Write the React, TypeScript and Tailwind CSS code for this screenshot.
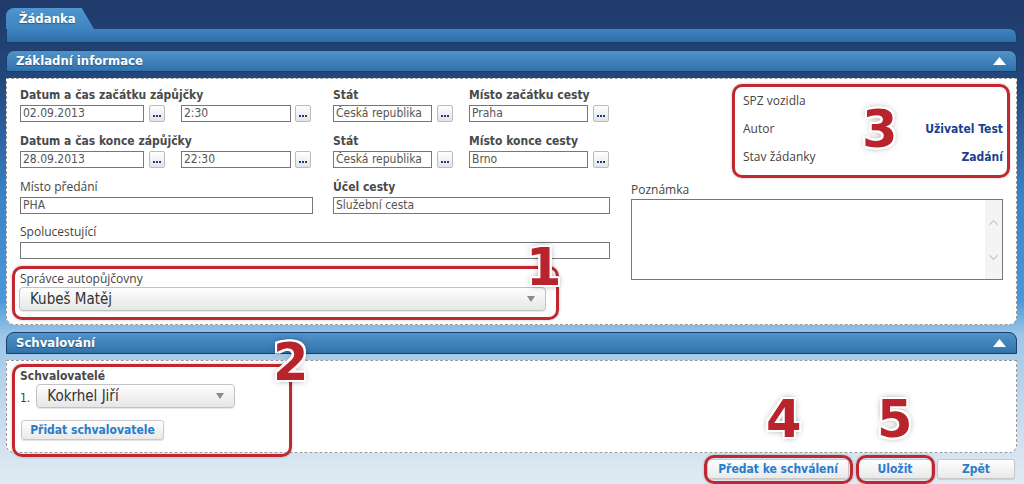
import React from 'react';
import { ChevronUp, ChevronDown } from 'lucide-react';

const tahoma = "font-['DejaVu_Sans_Condensed','DejaVu_Sans',sans-serif]";
const segoe = "font-['Open_Sans','Noto_Sans',sans-serif]";

const Input: React.FC<{ value?: string; w: string }> = ({ value, w }) => (
  <div className={`${w} ${tahoma} h-[17px] border border-[#777] bg-white px-[2px] text-[12px] leading-[15px] text-[#555] overflow-hidden whitespace-nowrap`}>
    {value}
  </div>
);

const Dots = () => (
  <div className="flex h-[17px] w-[16px] items-end justify-center gap-[1px] rounded-[2px] border border-[#bcbcbc] bg-gradient-to-b from-white to-[#e4e4e4] pb-[4px]">
    <span className="h-[2px] w-[2px] bg-[#1b3f8c]" />
    <span className="h-[2px] w-[2px] bg-[#1b3f8c]" />
    <span className="h-[2px] w-[2px] bg-[#1b3f8c]" />
  </div>
);

const BoldLabel: React.FC<{ children: React.ReactNode }> = ({ children }) => (
  <div className={`${tahoma} h-[16px] text-[12px] font-bold leading-[16px] text-[#4a4a4a] whitespace-nowrap`}>{children}</div>
);

const Label: React.FC<{ children: React.ReactNode }> = ({ children }) => (
  <div className={`${segoe} h-[16px] text-[12px] leading-[16px] text-[#444] whitespace-nowrap`}>{children}</div>
);

const UpArrow = () => (
  <svg width="13" height="8" viewBox="0 0 13 8">
    <polygon points="6.5,0 13,8 0,8" fill="#fff" />
  </svg>
);

const SectionHeader: React.FC<{ title: string }> = ({ title }) => (
  <div className="flex h-[22px] items-center justify-between rounded-t-[8px] border border-[#1b3d66] bg-gradient-to-b from-[#4e93ca] to-[#3273ab] pl-[9px] pr-[10px]">
    <span className={`${tahoma} text-[13px] font-bold text-white [text-shadow:0_1px_1px_rgba(0,0,0,0.35)]`}>{title}</span>
    <UpArrow />
  </div>
);

const Select: React.FC<{ value: string; w: string }> = ({ value, w }) => (
  <div className={`${w} flex h-[24px] items-center justify-between rounded-[4px] border border-[#c2c2c2] bg-gradient-to-b from-[#fefefe] to-[#e6e6e6] pl-[10px] pr-[10px] shadow-[0_1px_1px_rgba(0,0,0,0.1)]`}>
    <span className={`${tahoma} text-[15px] text-[#333]`}>{value}</span>
    <svg width="8" height="6" viewBox="0 0 8 6">
      <polygon points="0,0 8,0 4,6" fill="#8a8a8a" />
    </svg>
  </div>
);

const Button: React.FC<{ label: string; w: string }> = ({ label, w }) => (
  <div className={`${w} ${tahoma} flex h-[20px] items-center justify-center rounded-[3px] border border-[#c8c8c8] bg-gradient-to-b from-white to-[#e9e9e9] text-[12px] font-bold text-[#2a7ccc] shadow-[0_1px_1px_rgba(0,0,0,0.12)]`}>
    {label}
  </div>
);

const numStyle =
  "absolute font-['DejaVu_Sans',sans-serif] text-[51px] font-bold leading-none text-[#b9232b] [text-shadow:-2px_-2px_0_#fff,2px_-2px_0_#fff,-2px_2px_0_#fff,2px_2px_0_#fff,0_2px_0_#fff,0_-2px_0_#fff,2px_0_0_#fff,-2px_0_0_#fff,0_0_7px_rgba(0,0,0,0.55)]";
const boxStyle = 'absolute rounded-[10px] border-[3px] border-[#c1272e] shadow-[0_0_3px_rgba(0,0,0,0.25)]';

export default function App() {
  return (
    <div className="relative h-[484px] w-[1024px] overflow-hidden bg-[linear-gradient(to_bottom,#1f3a6a_0px,#23467c_78px,#3a84ca_200px,#4a98d8_300px,#7cb6e2_322px,#9cc6e8_335px,#c4daee_410px,#e2ebf4_484px)] pl-[6px] pr-[7px] pt-[8px]">
      {/* tab */}
      <div className="flex h-[21px] w-[88px] items-center rounded-tl-[8px] bg-gradient-to-b from-[#4f95ce] to-[#3d84c1] pl-[13px] [clip-path:polygon(0_0,86%_0,100%_100%,0_100%)]">
        <span className={`${tahoma} text-[13px] font-bold text-white [text-shadow:0_1px_1px_rgba(0,0,0,0.35)]`}>Žádanka</span>
      </div>
      <div className="h-[14px] rounded-tr-[7px] border-x border-b border-[#1b3d66] bg-gradient-to-b from-[#3d84c1] to-[#2f6ea8]" />

      {/* Základní informace */}
      <div className="mt-[7px]">
        <SectionHeader title="Základní informace" />
      </div>
      <div className="mt-[6px] flex h-[247px] rounded-b-[8px] border border-dashed border-[#9a9a9a] bg-white pl-[13px] pt-[8px]">
        <div className="w-[590px]">
          {/* row A */}
          <div className="flex">
            <div className="w-[313px]">
              <BoldLabel>Datum a čas začátku zápůjčky</BoldLabel>
              <div className="mt-[2px] flex items-center">
                <Input w="w-[124px]" value="02.09.2013" />
                <div className="ml-[5px]"><Dots /></div>
                <div className="ml-[16px]"><Input w="w-[110px]" value="2:30" /></div>
                <div className="ml-[4px]"><Dots /></div>
              </div>
            </div>
            <div className="w-[136px]">
              <BoldLabel>Stát</BoldLabel>
              <div className="mt-[2px] flex items-center">
                <Input w="w-[99px]" value="Česká republika" />
                <div className="ml-[5px]"><Dots /></div>
              </div>
            </div>
            <div>
              <BoldLabel>Místo začátku cesty</BoldLabel>
              <div className="mt-[2px] flex items-center">
                <Input w="w-[119px]" value="Praha" />
                <div className="ml-[5px]"><Dots /></div>
              </div>
            </div>
          </div>
          {/* row B */}
          <div className="mt-[11px] flex">
            <div className="w-[313px]">
              <BoldLabel>Datum a čas konce zápůjčky</BoldLabel>
              <div className="mt-[2px] flex items-center">
                <Input w="w-[124px]" value="28.09.2013" />
                <div className="ml-[5px]"><Dots /></div>
                <div className="ml-[16px]"><Input w="w-[110px]" value="22:30" /></div>
                <div className="ml-[4px]"><Dots /></div>
              </div>
            </div>
            <div className="w-[136px]">
              <BoldLabel>Stát</BoldLabel>
              <div className="mt-[2px] flex items-center">
                <Input w="w-[99px]" value="Česká republika" />
                <div className="ml-[5px]"><Dots /></div>
              </div>
            </div>
            <div>
              <BoldLabel>Místo konce cesty</BoldLabel>
              <div className="mt-[2px] flex items-center">
                <Input w="w-[119px]" value="Brno" />
                <div className="ml-[5px]"><Dots /></div>
              </div>
            </div>
          </div>
          {/* row C */}
          <div className="mt-[11px] flex">
            <div className="w-[313px]">
              <Label>Místo předání</Label>
              <div className="mt-[2px]"><Input w="w-[293px]" value="PHA" /></div>
            </div>
            <div>
              <BoldLabel>Účel cesty</BoldLabel>
              <div className="mt-[2px]"><Input w="w-[277px]" value="Služební cesta" /></div>
            </div>
          </div>
          {/* row D */}
          <div className="mt-[10px]">
            <Label>Spolucestující</Label>
            <div className="mt-[2px]"><Input w="w-[590px]" /></div>
          </div>
          {/* row E */}
          <div className="mt-[12px]">
            <Label>Správce autopůjčovny</Label>
            <div className="-ml-[1px]"><Select w="w-[527px]" value="Kubeš Matěj" /></div>
          </div>
        </div>

        <div className="ml-[21px] w-[372px]">
          <div className={`${segoe} ml-[112px] w-[260px] text-[12px] text-[#444]`}>
            <div className="flex h-[28px] items-center justify-between">
              <span>SPZ vozidla</span>
            </div>
            <div className="flex h-[28px] items-center justify-between">
              <span>Autor</span>
              <span className={`${tahoma} font-bold text-[#1d3f90]`}>Uživatel Test</span>
            </div>
            <div className="flex h-[28px] items-center justify-between">
              <span>Stav žádanky</span>
              <span className={`${tahoma} font-bold text-[#1d3f90]`}>Zadání</span>
            </div>
          </div>
          <div className="mt-[11px]">
            <Label>Poznámka</Label>
          </div>
          <div className="mt-[1px] flex h-[81px] justify-end border border-[#777] bg-white">
            <div className="flex w-[17px] flex-col items-center justify-center gap-[20px] bg-[#f4f4f4] text-[#c6c6c6]">
              <ChevronUp size={15} strokeWidth={2} />
              <ChevronDown size={15} strokeWidth={2} />
            </div>
          </div>
        </div>
      </div>

      {/* Schvalování */}
      <div className="mt-[7px]">
        <SectionHeader title="Schvalování" />
      </div>
      <div className="mt-[6px] h-[93px] rounded-b-[8px] border border-dashed border-[#9a9a9a] bg-white pl-[13px] pt-[7px]">
        <BoldLabel>Schvalovatelé</BoldLabel>
        <div className="flex items-center">
          <span className={`${tahoma} mt-[4px] text-[12px] text-[#444]`}>1.</span>
          <div className="ml-[6px]"><Select w="w-[199px]" value="Kokrhel Jiří" /></div>
        </div>
        <div className="mt-[12px] ml-[1px]">
          <Button w="w-[143px]" label="Přidat schvalovatele" />
        </div>
      </div>

      {/* buttons */}
      <div className="mt-[6px] flex justify-end pr-[2px]">
        <Button w="w-[142px]" label="Předat ke schválení" />
        <div className="ml-[9px]"><Button w="w-[74px]" label="Uložit" /></div>
        <div className="ml-[5px]"><Button w="w-[78px]" label="Zpět" /></div>
      </div>

      {/* annotations */}
      <div className={boxStyle + ' left-[12px] top-[266px] h-[54px] w-[547px]'} />
      <div className={boxStyle + ' left-[12px] top-[364px] h-[93px] w-[280px]'} />
      <div className={boxStyle + ' left-[732px] top-[84px] h-[94px] w-[278px]'} />
      <div className={boxStyle + ' left-[704px] top-[455px] h-[29px] w-[149px]'} />
      <div className={boxStyle + ' left-[856px] top-[455px] h-[29px] w-[79px]'} />
      <span className={numStyle + ' left-[526px] top-[242px]'}>1</span>
      <span className={numStyle + ' left-[273px] top-[337px]'}>2</span>
      <span className={numStyle + ' left-[862px] top-[104px]'}>3</span>
      <span className={numStyle + ' left-[766px] top-[394px]'}>4</span>
      <span className={numStyle + ' left-[877px] top-[394px]'}>5</span>
    </div>
  );
}
